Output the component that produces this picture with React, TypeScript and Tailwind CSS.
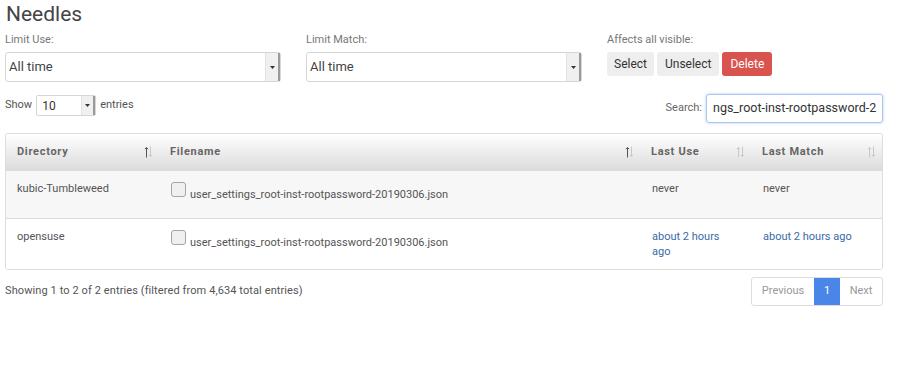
import { useState } from 'react';

function SortIcon({ active }: { active: boolean }) {
  return (
    <svg width="9" height="12" viewBox="0 0 9 12" className="shrink-0">
      <g strokeWidth="1" fill="none">
        <path d="M2.5 1.5V11.5M0.8 3.2L2.5 1.5L4.2 3.2" stroke={active ? '#555' : '#c8c8c8'} />
        <path d="M6.5 0.5V10.5M4.8 8.8L6.5 10.5L8.2 8.8" stroke="#c8c8c8" />
      </g>
    </svg>
  );
}

function SelectBox({ value }: { value: string }) {
  return (
    <div className="flex h-[30px] w-full items-stretch rounded-[3px] border border-[#d6d6d6] bg-white">
      <span className="flex flex-1 items-center pl-[3px] text-[13px] text-[#444]">{value}</span>
      <span className="flex w-[15px] items-center justify-center border-l border-[#e2e2e2] border-r-2 border-r-[#9a9a9a] bg-[#f0f0f0]">
        <svg width="5" height="3" viewBox="0 0 5 3"><path d="M0 0H5L2.5 3Z" fill="#333" /></svg>
      </span>
    </div>
  );
}

const rows = [
  { dir: 'kubic-Tumbleweed', file: 'user_settings_root-inst-rootpassword-20190306.json', use: 'never', match: 'never', link: false },
  { dir: 'opensuse', file: 'user_settings_root-inst-rootpassword-20190306.json', use: 'about 2 hours ago', match: 'about 2 hours ago', link: true },
];

export default function App() {
  const [checked, setChecked] = useState<boolean[]>([false, false]);

  return (
    <div className="h-[377px] w-[907px] bg-white px-[5px] text-[#555]" style={{ fontFamily: 'Roboto, "Liberation Sans", sans-serif' }}>
      <div className="w-[878px]">
        <h1 className="pt-[1px] pl-[1px] text-[21px] leading-[26px] text-[#444]">Needles</h1>

        {/* Filters */}
        <div className="mt-[6px] grid grid-cols-[276px_276px_276px] gap-x-[25px]">
          <div>
            <div className="text-[11px] leading-[14px] text-[#777]">Limit Use:</div>
            <div className="mt-[5px]"><SelectBox value="All time" /></div>
          </div>
          <div>
            <div className="text-[11px] leading-[14px] text-[#777]">Limit Match:</div>
            <div className="mt-[5px]"><SelectBox value="All time" /></div>
          </div>
          <div>
            <div className="text-[11px] leading-[14px] text-[#777]">Affects all visible:</div>
            <div className="mt-[5px] flex gap-[3px]">
              <button className="h-[24px] rounded-[3px] bg-[#eeeeee] px-[7px] text-[12px] text-[#333]">Select</button>
              <button className="h-[24px] rounded-[3px] bg-[#eeeeee] px-[8px] text-[12px] text-[#333]">Unselect</button>
              <button className="h-[24px] rounded-[3px] bg-[#d9534f] px-[8px] text-[12px] text-white">Delete</button>
            </div>
          </div>
        </div>

        {/* Length + search */}
        <div className="mt-[12px] flex items-start justify-between">
          <div className="mt-[1px] flex items-center gap-[4px] text-[11px] text-[#555]">
            <span>Show</span>
            <div className="flex h-[21px] w-[60px] items-stretch rounded-[2px] border border-[#d6d6d6]">
              <span className="flex flex-1 items-center pl-[5px] text-[12px] text-[#333]">10</span>
              <span className="flex w-[14px] items-center justify-center border-l border-[#e2e2e2] border-r-2 border-r-[#9a9a9a] bg-[#f0f0f0]">
                <svg width="5" height="3" viewBox="0 0 5 3"><path d="M0 0H5L2.5 3Z" fill="#333" /></svg>
              </span>
            </div>
            <span>entries</span>
          </div>
          <div className="flex items-center gap-[4px] text-[11px] text-[#666]">
            <span>Search:</span>
            <div className="flex h-[29px] w-[177px] items-center overflow-hidden rounded-[3px] border border-[#a9c6ee] px-[6px] text-[12.5px] text-[#333] shadow-[0_0_3px_rgba(102,150,230,0.5)]">
              <span className="whitespace-nowrap">ngs_root-inst-rootpassword-2</span>
            </div>
          </div>
        </div>

        {/* Table */}
        <div className="mt-[10px] overflow-hidden rounded-[3px] border border-[#dddddd]">
          <table className="w-full table-fixed border-collapse text-[11px]">
            <colgroup>
              <col className="w-[153px]" />
              <col className="w-[481px]" />
              <col className="w-[111px]" />
              <col />
            </colgroup>
            <thead>
              <tr className="h-[36px] bg-gradient-to-b from-[#ffffff] to-[#dcdcdc] text-left">
                {[
                  ['Directory', true],
                  ['Filename', true],
                  ['Last Use', false],
                  ['Last Match', false],
                ].map(([label, active]) => (
                  <th key={label as string} className="pl-[11px] pr-[6px] font-bold">
                    <div className="flex items-center justify-between">
                      <span className="tracking-[0.7px] text-[#666]">{label}</span>
                      <SortIcon active={active as boolean} />
                    </div>
                  </th>
                ))}
              </tr>
            </thead>
            <tbody>
              {rows.map((r, i) => (
                <tr key={i} className={`border-t border-[#dddddd] align-top ${i === 0 ? 'bg-[#f7f7f7]' : 'bg-white'}`}>
                  <td className="px-[11px] pt-[10px] pb-[10px] leading-[15px] text-[#555]">{r.dir}</td>
                  <td className="px-[12px] pt-[10px] pb-[21px] leading-[15px] text-[#555]">
                    <div className="flex items-end">
                      <button
                        onClick={() => setChecked(checked.map((c, j) => (j === i ? !c : c)))}
                        className={`mt-[1px] h-[15px] w-[15px] shrink-0 rounded-[3px] border border-[#a5a5a5] ${checked[i] ? 'bg-[#4a86e8]' : 'bg-[#f0f0f0]'}`}
                      />
                      <span className="relative top-[5px] ml-[4px] whitespace-nowrap">{r.file}</span>
                    </div>
                  </td>
                  <td className={`px-[12px] pt-[10px] pb-[10px] leading-[15px] ${r.link ? 'text-[#3b6aa8]' : 'text-[#555]'}`}>{r.use}</td>
                  <td className={`px-[12px] pt-[10px] pb-[10px] leading-[15px] ${r.link ? 'text-[#3b6aa8]' : 'text-[#555]'}`}>{r.match}</td>
                </tr>
              ))}
            </tbody>
          </table>
        </div>

        {/* Footer */}
        <div className="mt-[7px] flex items-center justify-between">
          <span className="text-[11px] tracking-[0.1px] text-[#555]">Showing 1 to 2 of 2 entries (filtered from 4,634 total entries)</span>
          <div className="flex h-[29px] items-stretch overflow-hidden rounded-[3px] border border-[#dddddd] text-[11px]">
            <span className="flex w-[62px] items-center justify-center text-[#999]">Previous</span>
            <span className="flex w-[26px] items-center justify-center bg-[#4a86e8] text-white">1</span>
            <span className="flex w-[42px] items-center justify-center text-[#999]">Next</span>
          </div>
        </div>
      </div>
    </div>
  );
}
